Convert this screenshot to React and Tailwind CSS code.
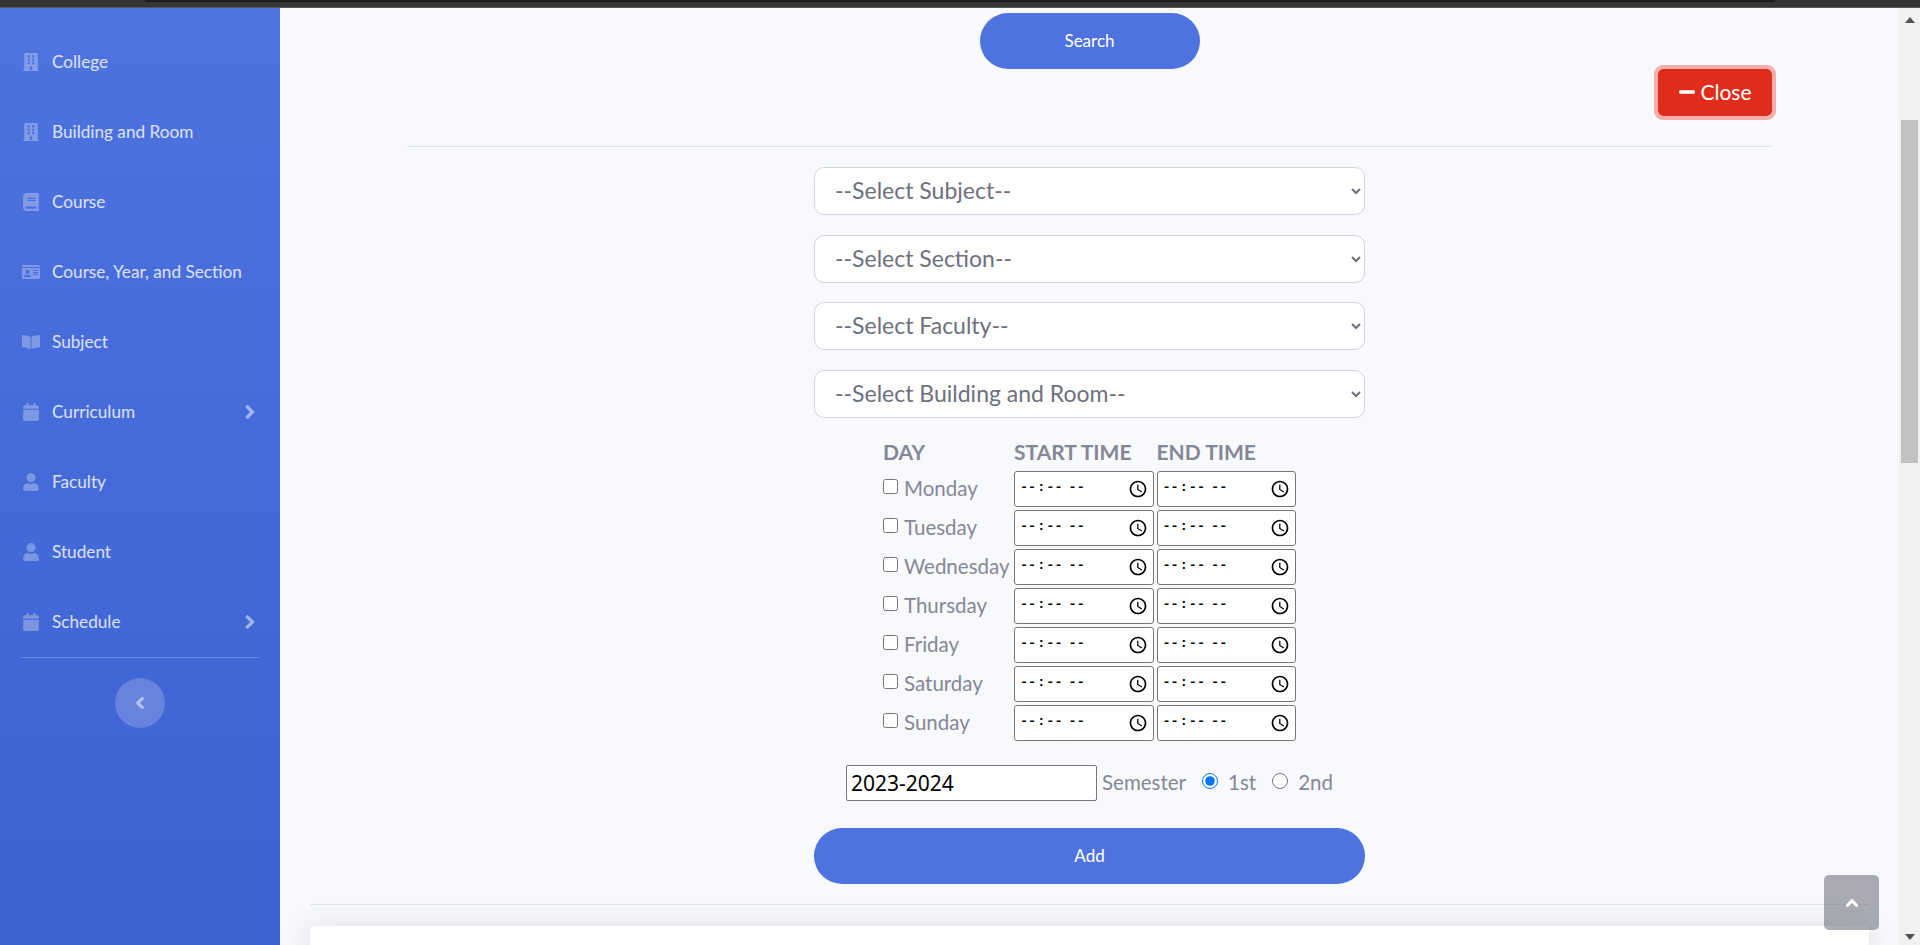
import React from 'react';
import {
  FaBuilding,
  FaBook,
  FaIdCard,
  FaBookOpen,
  FaCalendar,
  FaUser,
  FaAngleRight,
  FaAngleLeft,
  FaAngleUp,
  FaMinus,
} from 'react-icons/fa';

const NAV = [
  { label: 'College', icon: FaBuilding },
  { label: 'Building and Room', icon: FaBuilding },
  { label: 'Course', icon: FaBook },
  { label: 'Course, Year, and Section', icon: FaIdCard },
  { label: 'Subject', icon: FaBookOpen },
  { label: 'Curriculum', icon: FaCalendar, arrow: true },
  { label: 'Faculty', icon: FaUser },
  { label: 'Student', icon: FaUser },
  { label: 'Schedule', icon: FaCalendar, arrow: true },
];

const SELECTS = ['--Select Subject--', '--Select Section--', '--Select Faculty--', '--Select Building and Room--'];
const DAYS = ['Monday', 'Tuesday', 'Wednesday', 'Thursday', 'Friday', 'Saturday', 'Sunday'];

function Sidebar() {
  return (
    <aside className="w-[280px] shrink-0 pt-[19px] bg-gradient-to-b from-[#4e73df] to-[#3c62d2] text-white/80">
      {NAV.map(({ label, icon: Icon, arrow }) => (
        <a key={label} href="#" className="flex items-center h-[70px] pl-5 pr-[19px] text-[17.2px]">
          <span className="w-[22px] flex justify-center text-white/30">
            <Icon size={18} />
          </span>
          <span className="ml-[10px] flex-1">{label}</span>
          {arrow && <FaAngleRight size={22} className="text-white/50" />}
        </a>
      ))}
      <div className="mx-5 border-t border-white/20" />
      <button className="block mx-auto mt-5 w-[50px] h-[50px] rounded-full bg-white/20 text-white/50">
        <FaAngleLeft size={20} className="mx-auto" />
      </button>
    </aside>
  );
}

function TimeInput() {
  return (
    <input
      type="time"
      className="w-full h-9 pl-1 pr-[5px] bg-white text-black font-bold text-[13.5px] border border-[#767676] rounded-[3px] font-['Liberation_Mono',monospace] [&::-webkit-calendar-picker-indicator]:w-5 [&::-webkit-calendar-picker-indicator]:h-5 [&::-webkit-calendar-picker-indicator]:m-0 [&::-webkit-calendar-picker-indicator]:p-0 [&::-webkit-calendar-picker-indicator]:contrast-200"
    />
  );
}

export default function App() {
  return (
    <div className="h-[945px] overflow-hidden flex flex-col bg-[#f8f9fc] font-['Lato',sans-serif]">
      <div className="h-2 shrink-0 bg-[#353535] border-b border-[#555] px-[145px]">
        <div className="h-[2px] bg-[#1e1e1e] rounded-b-sm" />
      </div>

      <div className="flex flex-1 min-h-0">
        <Sidebar />

        <main className="flex-1 min-w-0 overflow-hidden px-[30px]">
          <button className="block mx-auto mt-[5px] w-[220px] h-14 rounded-full bg-[#4e73df] text-white text-[17px]">
            Search
          </button>

          <div className="mx-[97px]">
            <div className="flex justify-end">
              <button className="flex items-center justify-center gap-1 w-[114px] h-[47px] pb-[2px] rounded-[5px] bg-[#e02d1b] text-white text-[21px] outline-4 outline-[#f3aea9]">
                <FaMinus size={18} />
                Close
              </button>
            </div>
            <hr className="mt-[30px] border-[#dfe1ea]" />
          </div>

          <div className="mx-auto mt-5 w-[551px] flex flex-col gap-[19.5px]">
            {SELECTS.map((s) => (
              <select
                key={s}
                className="w-full h-12 pl-4 pr-2 pb-[2px] bg-white text-[#6e707e] text-[23px] border border-[#d1d3e2] rounded-[10px]"
              >
                <option>{s}</option>
              </select>
            ))}
          </div>

          <div className="mx-auto mt-5 w-[413px] grid grid-cols-[128px_139.5px_139.5px] gap-x-[3px] gap-y-[3px] items-center text-[#858796] text-[20.5px]">
            <div className="font-bold text-[21px] h-[30px] leading-7">DAY</div>
            <div className="font-bold text-[21px] h-[30px] leading-7">START TIME</div>
            <div className="font-bold text-[21px] h-[30px] leading-7">END TIME</div>
            {DAYS.map((d) => (
              <React.Fragment key={d}>
                <label className="flex items-center gap-[6px] whitespace-nowrap">
                  <input type="checkbox" className="w-[15px] h-[15px] -mt-1" />
                  {d}
                </label>
                <TimeInput />
                <TimeInput />
              </React.Fragment>
            ))}
          </div>

          <div className="mt-6 flex items-center justify-center text-[#858796] text-[20.5px]">
            <input
              defaultValue="2023-2024"
              className="w-[251px] h-9 px-1 bg-white text-black text-[21px] border border-[#767676] rounded-[2px] font-['Noto_Sans',sans-serif]"
            />
            <span className="ml-[5px]">Semester</span>
            <input type="radio" name="sem" defaultChecked className="ml-4 w-4 h-4 -mt-1" />
            <span className="ml-[10px]">1st</span>
            <input type="radio" name="sem" className="ml-4 w-4 h-4 -mt-1" />
            <span className="ml-[10px]">2nd</span>
          </div>

          <button className="block mx-auto mt-[27px] w-[551px] h-14 rounded-full bg-[#4e73df] text-white text-[17px]">
            Add
          </button>

          <hr className="mt-5 border-[#dfe1ea]" />

          <div className="mt-[21px] h-[200px] bg-white rounded-t-[5px] shadow-[0_2px_28px_0_rgba(58,59,69,0.15)]" />
        </main>

        <div className="w-[21px] shrink-0 flex flex-col items-center bg-[#f1f1f1]">
          <svg width="10" height="6" viewBox="0 0 10 6" className="mt-[9px] fill-[#505050]">
            <path d="M5 0 10 6H0z" />
          </svg>
          <div className="mt-[97px] w-[17px] h-[343px] bg-[#c1c1c1]" />
          <svg width="10" height="6" viewBox="0 0 10 6" className="mt-auto mb-[5px] fill-[#505050]">
            <path d="M0 0h10L5 6z" />
          </svg>
        </div>
      </div>

      <a href="#" className="fixed left-[1824px] top-[875px] w-[55px] h-[55px] flex items-center justify-center rounded-[5px] bg-[#5a5c69]/50 text-white">
        <FaAngleUp size={20} />
      </a>
    </div>
  );
}
